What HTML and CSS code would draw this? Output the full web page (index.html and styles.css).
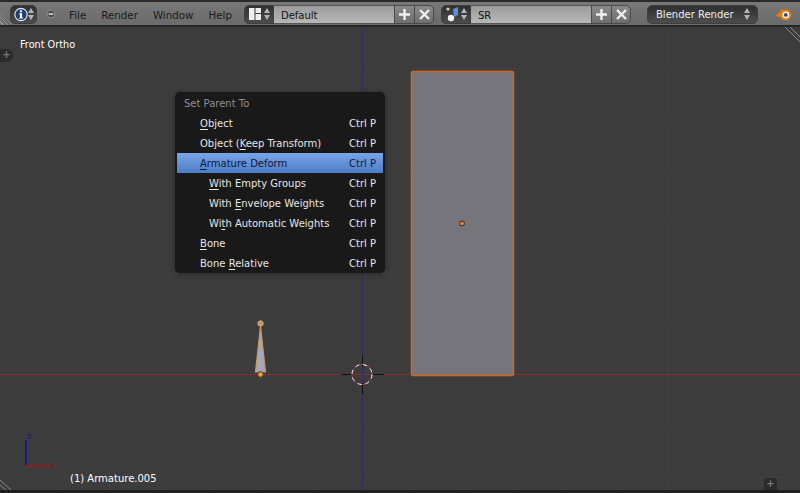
FILE: index.html
```html
<!DOCTYPE html>
<html>
	<head>
		<meta charset="utf-8">
		<title>Blender</title>
		<link rel="stylesheet" href="styles.css">
	</head>
	<body>
		<div class="header">
			<div class="selector info">
				<svg width="17" height="17" viewBox="0 0 17 17"><circle cx="8.5" cy="8.5" r="7.5" fill="#1d3f7e" stroke="#dfe6f2" stroke-width="1.4"/><rect x="7.2" y="3.4" width="2.6" height="2.4" fill="#fff"/><path d="M6.4 7h3.4v5h1v1.4H6.2V12h1V8.4h-.8z" fill="#fff"/></svg>
				<span class="updown"><i class="up"></i><i class="down"></i></span>
			</div>
			<svg class="collapse" width="10" height="10" viewBox="0 0 10 10"><circle cx="5" cy="5" r="4" fill="#4c4c4c" stroke="#8c8c8c"/><rect x="2.6" y="4.2" width="4.8" height="1.6" fill="#d8d8d8"/></svg>
			<div class="menus">
				<span>File</span>
				<span>Render</span>
				<span>Window</span>
				<span>Help</span>
			</div>
			<div class="datablock layout">
				<div class="selector icon-only">
					<svg width="14" height="14" viewBox="0 0 14 14"><rect x="1" y="1" width="5.5" height="12" fill="#eee"/><rect x="7.5" y="1" width="5.5" height="5" fill="#eee"/><rect x="7.5" y="7" width="5.5" height="6" fill="#eee"/></svg>
					<span class="updown"><i class="up"></i><i class="down"></i></span>
				</div>
				<div class="field">Default</div>
				<div class="btn"><svg width="13" height="13" viewBox="0 0 13 13"><path d="M6.5 1v11M1 6.5h11" stroke="#f0f0f0" stroke-width="2.4"/></svg></div>
				<div class="btn last"><svg width="13" height="13" viewBox="0 0 13 13"><path d="M2 2l9 9M11 2l-9 9" stroke="#f0f0f0" stroke-width="2.4"/></svg></div>
			</div>
			<div class="datablock scene">
				<div class="selector icon-only">
					<svg width="16" height="16" viewBox="0 0 16 16"><path d="M8 3l5-2v8l-4 2z" fill="#5d8fd6"/><circle cx="6" cy="12" r="3.2" fill="#f2f2f2"/><circle cx="3" cy="3" r="1.6" fill="#dcd89a"/></svg>
					<span class="updown"><i class="up"></i><i class="down"></i></span>
				</div>
				<div class="field">SR</div>
				<div class="btn"><svg width="13" height="13" viewBox="0 0 13 13"><path d="M6.5 1v11M1 6.5h11" stroke="#f0f0f0" stroke-width="2.4"/></svg></div>
				<div class="btn last"><svg width="13" height="13" viewBox="0 0 13 13"><path d="M2 2l9 9M11 2l-9 9" stroke="#f0f0f0" stroke-width="2.4"/></svg></div>
			</div>
			<div class="selector engine">
				<span class="engine-name">Blender Render</span>
				<span class="updown"><i class="up"></i><i class="down"></i></span>
			</div>
			<svg class="logo" width="18" height="16" viewBox="0 0 20 16"><path d="M1 9l6-4L5 3h6c4 0 7 2 7 6s-3 6-6 6-6-2-6-4L3 11z" fill="#e87d0d"/><circle cx="12" cy="9" r="3.8" fill="#f4f4f4"/><circle cx="12" cy="9" r="2.1" fill="#30507a"/></svg>
		</div>

		<div class="view">
			<svg class="scene-draw" width="800" height="463" viewBox="0 27 800 463">
				<!-- grid -->
				<path d="M7 27v463M58 27v463M109 27v463M160 27v463M211 27v463M262 27v463M313 27v463M413 27v463M464 27v463M515 27v463M566 27v463M617 27v463M668 27v463M719 27v463M770 27v463M0 69h800M0 120h800M0 171h800M0 222h800M0 273h800M0 324h800M0 426h800M0 477h800" stroke="#414141" stroke-width="1" fill="none"/>
				<path d="M0 374.500h800" stroke="#8a2e2e"/>
				<path d="M362.500 27v463" stroke="#2f2f63" stroke-width="1.200"/>

				<!-- plane -->
				<rect x="411.500" y="71.500" width="102" height="304" rx="1.500" fill="#76757c" stroke="#d9661a" stroke-width="1.500"/>
				<circle cx="462" cy="223.500" r="2.500" fill="#d9812e" stroke="#33261c"/>

				<!-- bone -->
				<path d="M260.500 326L265.500 372H255.500z" fill="#a3a7bd" stroke="#c99a56" stroke-width="1.200"/>
				<circle cx="260.500" cy="323.500" r="2.700" fill="#b09a84" stroke="#d8a868"/>
				<circle cx="260.500" cy="374.500" r="2.800" fill="#e0a040" stroke="#553318"/>

				<!-- 3d cursor -->
				<path d="M341 374.500h12M372 374.500h12M362.500 355v12M362.500 383v11" stroke="#111" stroke-width="1"/>
				<circle cx="362" cy="374.500" r="10" fill="none" stroke="#a04040"/>
				<circle cx="362" cy="374.500" r="10" fill="none" stroke="#f4f4f4" stroke-dasharray="4 4"/>

				<!-- axes -->
				<path d="M26 466V440" stroke="#1b1b8a" stroke-width="2"/>
				<path d="M26 466h23" stroke="#8e1d1d" stroke-width="2"/>

				<!-- corner stripes -->
				<path d="M0 480L12 491M0 485L7 491M785 27L800 42M790 27L800 37" stroke="#8a8a8a" fill="none"/>
			</svg>

			<span class="axis-z">z</span>
			<span class="axis-x">x</span>
			<span class="view-name">Front Ortho</span>
			<span class="object-name">(1) Armature.005</span>

			<div class="plus-tab left-tab">+</div>
			<div class="plus-tab right-tab">+</div>

			<div class="popup">
				<div class="popup-title">Set Parent To</div>
				<div class="row"><span><u>O</u>bject</span><span class="keys">Ctrl P</span></div>
				<div class="row"><span>Object (<u>K</u>eep Transform)</span><span class="keys">Ctrl P</span></div>
				<div class="row active"><span><u>A</u>rmature Deform</span><span class="keys">Ctrl P</span></div>
				<div class="row sub"><span><u>W</u>ith Empty Groups</span><span class="keys">Ctrl P</span></div>
				<div class="row sub"><span>With <u>E</u>nvelope Weights</span><span class="keys">Ctrl P</span></div>
				<div class="row sub"><span>Wi<u>t</u>h Automatic Weights</span><span class="keys">Ctrl P</span></div>
				<div class="row"><span><u>B</u>one</span><span class="keys">Ctrl P</span></div>
				<div class="row"><span>Bone <u>R</u>elative</span><span class="keys">Ctrl P</span></div>
			</div>
		</div>
		<div class="bottom-line"></div>
	</body>
</html>
```

FILE: styles.css
```css
*{
	margin: 0;
	padding: 0;
	box-sizing: border-box;
}
html,body{
	width: 800px;
	height: 493px;
	overflow: hidden;
}
body{
	display: flex;
	flex-direction: column;
	background-color: #3c3c3c;
	font-family: "DejaVu Sans", "Liberation Sans", sans-serif;
	font-size: 10px;
	color: #fff;
}

/* top bar */
.header{
	position: relative;
	height: 27px;
	flex-shrink: 0;
	display: flex;
	align-items: center;
	padding: 1px 0 0 10px;
	background: linear-gradient(#787878, #6a6a6a);
	border-top: 2px solid #2a2a2a;
	border-bottom: 2px solid #262626;
	color: #111;
}
/* the grab corner on the left of the bar */
.header::before{
	content: "";
	position: absolute;
	left: 0;
	bottom: 0;
	width: 12px;
	height: 12px;
	background: repeating-linear-gradient(45deg, transparent 0 2px, #9a9a9a 2px 3px);
	clip-path: polygon(0 0, 100% 100%, 0 100%);
}
.selector{
	height: 19px;
	display: flex;
	align-items: center;
	background: linear-gradient(#2f2f2f, #4d4d4d);
	border: 1px solid #3e3e3e;
	border-radius: 5px;
}
.info{
	width: 27px;
	justify-content: space-between;
	padding: 0 2px 0 3px;
}
.updown{
	display: flex;
	flex-direction: column;
	gap: 2px;
}
.updown i{
	display: block;
	width: 0;
	height: 0;
	border-left: 3px solid transparent;
	border-right: 3px solid transparent;
}
.updown .up{
	border-bottom: 5px solid #b4b4b4;
}
.updown .down{
	border-top: 5px solid #b4b4b4;
}
.collapse{
	margin-left: 9px;
}
.menus{
	display: flex;
	gap: 15px;
	margin-left: 13px;
	padding-top: 1px;
	width: 175px;
	font-size: 10.300px;
	color: #1a1a1a;
}
.datablock{
	display: flex;
	height: 19px;
}
.datablock .selector{
	width: 30px;
	border-radius: 5px 0 0 5px;
	justify-content: space-between;
	padding: 0 3px;
}
.field{
	width: 120px;
	line-height: 19px;
	padding-left: 7px;
	background: linear-gradient(#9a9a9a, #b8b8b8);
	border-top: 1px solid #555;
	border-bottom: 1px solid #555;
	color: #111;
}
.btn{
	width: 20px;
	display: flex;
	align-items: center;
	justify-content: center;
	background: linear-gradient(#8a8a8a, #6e6e6e);
	border: 1px solid #4a4a4a;
	border-right: 0;
}
.btn.last{
	border-right: 1px solid #4a4a4a;
	border-radius: 0 5px 5px 0;
}
.scene{
	margin-left: 7px;
}
.engine{
	width: 111px;
	margin-left: 16px;
	justify-content: space-between;
	padding: 0 7px 0 8px;
	color: #eee;
}
.engine-name{
	padding-top: 1px;
}
.logo{
	margin-left: 17px;
}

/* 3d view */
.view{
	position: relative;
	flex: 1;
	overflow: hidden;
}
.scene-draw{
	position: absolute;
	left: 0;
	top: 0;
}
.view-name, .object-name, .axis-z, .axis-x{
	position: absolute;
	line-height: 14px;
}
.view-name{
	left: 20px;
	top: 11px;
	font-size: 9.700px;
}
.object-name{
	left: 70px;
	top: 445px;
}
.axis-z{
	left: 27px;
	top: 402px;
	font-size: 9px;
	color: #1b1b8a;
}
.axis-x{
	left: 51px;
	top: 431px;
	font-size: 9px;
	color: #8e1d1d;
}
.plus-tab{
	position: absolute;
	width: 13px;
	height: 13px;
	line-height: 12px;
	text-align: center;
	background-color: #2b2b2b;
	color: #777;
	font-weight: bold;
}
.left-tab{
	left: 0;
	top: 22px;
	border-radius: 0 6px 6px 0;
}
.right-tab{
	right: 23px;
	top: 451px;
	border-radius: 3px 3px 0 0;
}

/* popup menu */
.popup{
	position: absolute;
	left: 175px;
	top: 65px;
	width: 210px;
	height: 181px;
	padding: 1px 2px;
	background-color: #191919;
	border-radius: 5px;
	box-shadow: 0 1px 5px rgba(0,0,0,.35);
}
.popup-title{
	height: 20px;
	line-height: 22px;
	padding-left: 7px;
	color: #8f8f8f;
}
.row{
	height: 20px;
	line-height: 22px;
	display: flex;
	justify-content: space-between;
	padding: 0 6px 0 23px;
	color: #e6e6e6;
}
.row.sub{
	padding-left: 32px;
}
.row u{
	text-underline-offset: 2px;
}
.row.active{
	background: linear-gradient(#7aa4e8, #4d7cc8);
	color: #0b1a33;
}
.keys{
	width: 28px;
	white-space: nowrap;
}
.bottom-line{
	height: 3px;
	flex-shrink: 0;
	background-color: #1e1e1e;
}
```
